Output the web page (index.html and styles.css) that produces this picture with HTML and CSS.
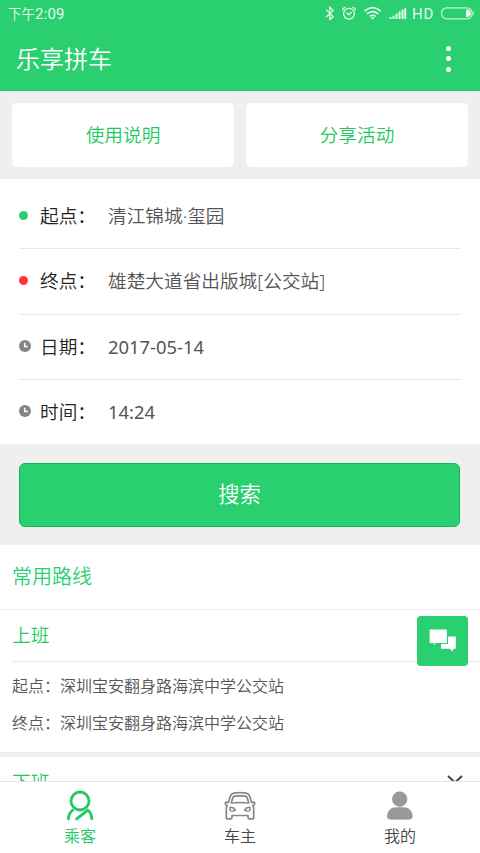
FILE: index.html
```html
<!DOCTYPE html>
<html lang="zh-CN">
<head>
<meta charset="utf-8">
<title>乐享拼车</title>
<link rel="stylesheet" href="styles.css">
</head>
<body>
<div class="app">
  <header class="header">
    <div class="status">
      <span class="clock">下午<b>2:09</b></span>
      <svg class="status-icons" width="84" height="20" viewBox="0 0 84 20" fill="none" stroke="#e3faeb" stroke-width="1.3">
        <path d="M1.200 9.400l7 6.700-3.500 3v-12.400l3.500 3.200-7 6.600" transform="translate(0 .5)"/>
        <circle cx="24.000" cy="13.700" r="5.400"/>
        <path d="M21.500 12.500l2.500 2.300 2.900-2.700M17.500 10.300q.3-2.500 3-2.900M30.500 10.300q-.3-2.500-3-2.900"/>
        <path d="M39.400 11.100q8.200-6.800 16.400 0M41.900 13.900q5.700-4.700 11.400 0M44.500 16.500q3.100-2.500 6.200 0" stroke-width="1.600"/>
        <circle cx="47.600" cy="18" r="1.300" fill="#e3faeb" stroke="none"/>
        <path d="M65.500 19v-1.800M68.500 19v-3.200M71.500 19v-5.200M74.500 19v-7.500M77.500 19v-9.500M80.200 19v-10.800" stroke-width="2"/>
      </svg>
      <span class="hd">HD</span>
      <svg class="battery" width="33" height="13" viewBox="0 0 33 13">
        <rect x=".6" y=".8" width="30.500" height="11" rx="5" fill="none" stroke="#c2f3d4" stroke-width="1.200"/>
        <path d="M25 2.500h1.500q3.300 0 3.300 3.800t-3.300 3.800h-1.500z" fill="#e3faeb"/>
        <path d="M32.300 4.500v3.600" stroke="#c2f3d4"/>
      </svg>
    </div>
    <div class="titlebar">
      <h1>乐享拼车</h1>
      <div class="more"><i></i><i></i><i></i></div>
    </div>
  </header>
  <nav class="links">
    <a class="link">使用说明</a>
    <a class="link">分享活动</a>
  </nav>
  <section class="form">
    <div class="row"><span class="mark"><i class="dot"></i></span><span class="label">起点：</span><span class="value">清江锦城·玺园</span></div>
    <div class="row"><span class="mark"><i class="dot red"></i></span><span class="label">终点：</span><span class="value">雄楚大道省出版城[公交站]</span></div>
    <div class="row"><span class="mark"><svg width="12" height="12" viewBox="0 0 12 12"><circle cx="6" cy="6" r="6" fill="#858585"/><path d="M5.700 2.800v3.700h3.200" fill="none" stroke="#fff" stroke-width="1.500"/></svg></span><span class="label">日期：</span><span class="value number">2017-05-14</span></div>
    <div class="row"><span class="mark"><svg width="12" height="12" viewBox="0 0 12 12"><circle cx="6" cy="6" r="6" fill="#858585"/><path d="M5.700 2.800v3.700h3.200" fill="none" stroke="#fff" stroke-width="1.500"/></svg></span><span class="label">时间：</span><span class="value number">14:24</span></div>
  </section>
  <div class="search"><button>搜索</button></div>
  <main class="routes">
    <h2>常用路线</h2>
    <article class="route">
      <h3>上班</h3>
      <div class="stops">
        <p>起点：深圳宝安翻身路海滨中学公交站</p>
        <p>终点：深圳宝安翻身路海滨中学公交站</p>
      </div>
      <div class="chat">
        <svg width="27" height="24" viewBox="0 0 27 24">
          <path d="M12 7.500h14.800v12.300h-2.800v3l-3.200-3H12z" fill="#fff"/>
          <path d="M0 0h18.500v14.500H7.300L4.100 17.300v-2.800H0z" fill="#fff" stroke="#2acf6f" stroke-width="1.200"/>
        </svg>
      </div>
    </article>
    <article class="route next">
      <h3>下班</h3>
      <svg class="chevron" width="16" height="10" viewBox="0 0 16 10" fill="none" stroke="#444" stroke-width="2"><path d="M1 1l7 6.500 7-6.500"/></svg>
    </article>
  </main>
  <footer class="tabs">
    <div class="tab active">
      <svg width="32" height="32" viewBox="0 0 32 32" fill="none" stroke="#1fca63" stroke-width="2.800" stroke-linecap="round">
        <circle cx="16" cy="11" r="9"/>
        <path d="M8.800 20Q4.800 23 4.400 28.800M23.800 20Q27.600 23 27.800 28.800M23.500 20.400L12.700 28.800"/>
      </svg>
      <span>乘客</span>
    </div>
    <div class="tab">
      <svg width="32" height="32" viewBox="0 0 32 32" fill="none" stroke="#858585" stroke-width="1.700" stroke-linejoin="round">
        <path d="M4.200 12.500L6.300 6.300Q7.200 3.600 9.800 3.100Q16 2.100 22.200 3.100Q24.800 3.600 25.700 6.300L27.800 12.500L30.300 12.200Q31.300 13.500 30 15L28.800 15.300Q29.700 17 29.700 19V27.800Q29.700 28.900 28.600 28.900H25.400Q24 28.900 24 27.600V25.500H8V27.600Q8 28.900 6.600 28.900H3.400Q2.300 28.900 2.300 27.800V19Q2.300 17 3.200 15.300L2 15Q.7 13.500 1.700 12.200Z"/>
        <path d="M7.200 13L8.900 7.500Q9.300 6.300 10.500 6.100Q16 5.500 21.500 6.100Q22.700 6.300 23.100 7.500L24.800 13Q16 12 7.200 13Z"/>
        <path d="M6 17.300Q10 17.300 11.500 20.200Q9 21.600 6.600 20.800Q5.200 19.800 6 17.300ZM26 17.300Q22 17.300 20.500 20.200Q23 21.600 25.400 20.800Q26.800 19.800 26 17.300Z" stroke-width="1.400"/>
      </svg>
      <span>车主</span>
    </div>
    <div class="tab">
      <svg width="32" height="32" viewBox="0 0 32 32" fill="#999" stroke="#888" stroke-width=".6">
        <circle cx="15.700" cy="9.100" r="7.300"/>
        <path d="M3.400 26.200Q4.200 17.800 11.500 17.700H20Q27.500 17.800 28.300 26.200Q28.300 29.100 25 29.200H6.700Q3.400 29.100 3.400 26.200Z"/>
      </svg>
      <span>我的</span>
    </div>
  </footer>
</div>
</body>
</html>
```
FILE: styles.css
```css
* { box-sizing: border-box; margin: 0; padding: 0; }
body {
  font-family: "Noto Sans", "Noto Sans CJK SC", sans-serif;
  font-weight: 350;
  background: #fff;
  color: #222;
}
.app { display: flex; flex-direction: column; width: 480px; height: 853px; overflow: hidden; background: #efefef; }
h1, h2, h3 { font-weight: 350; }
i { display: block; }
svg { display: block; flex: none; }

.header { flex: none; height: 91px; background: #2acf6f; border-bottom: 1px solid #24c867; color: #fff; }
.status { display: flex; height: 27px; padding-left: 8px; color: #e3faeb; font-family: Roboto, "Noto Sans CJK SC", sans-serif; }
.clock { width: 317px; font-size: 13.500px; line-height: 28px; }
.clock b { font-size: 15px; font-weight: 400; letter-spacing: .2px; }
.hd { width: 28px; margin-left: 3px; font-size: 15px; font-weight: 400; line-height: 28px; letter-spacing: .8px; }
.battery { margin: 7px 0 0 1px; }
.titlebar { display: flex; justify-content: space-between; align-items: center; height: 63px; padding: 0 29.500px 0 16px; }
h1 { font-size: 24px; line-height: 32px; }
.more { display: flex; flex-direction: column; gap: 5.500px; padding-top: 0; }
.more i { width: 5px; height: 5px; border-radius: 50%; background: #fff; }

.links { flex: none; display: flex; gap: 12px; height: 88px; padding: 12px; }
.link { flex: 1; height: 64px; border-radius: 5px; background: #fff; color: #1fc962; font-size: 18.670px; line-height: 63px; text-align: center; }

.form { flex: none; height: 265px; padding: 5px 19px 0; background: #fff; }
.row { display: flex; align-items: center; height: 65.330px; border-bottom: 1px solid #e9e9e9; font-size: 18.670px; line-height: 28px; }
.row:last-child { height: 64px; border-bottom: 0; }
.mark { width: 21px; margin-top: -1px; }
.dot { width: 9px; height: 9px; border-radius: 50%; background: #2acf6f; }
.dot.red { background: #ff3538; }
.label { width: 68px; white-space: nowrap; }
.value { color: #555; }
.number { font-size: 18.400px; font-weight: 400; }

.search { flex: none; height: 101px; padding: 18.500px 20px 0 19px; }
.search button { display: block; width: 100%; height: 64px; padding-bottom: 4px; border: 1px solid #16b354; border-radius: 6px; background: #2acf6f; color: #fff; font: inherit; font-size: 21.300px; }

.routes { flex: 1; min-height: 0; overflow: hidden; }
h2 { height: 65px; padding-left: 12px; border-bottom: 1px solid #eee; background: #fff; color: #2acf6f; font-size: 20px; line-height: 63px; }
.route { position: relative; height: 142px; padding-left: 12px; background: #fff; }
h3 { height: 52px; border-bottom: 1px solid #eaeaea; color: #1fc962; font-size: 18.670px; line-height: 50px; }
.stops { padding-top: 6px; color: #555; font-size: 16px; line-height: 37px; }
.chat { position: absolute; left: 417px; top: 6px; display: flex; align-items: center; justify-content: center; width: 51px; height: 50px; border-radius: 4px; background: #2acf6f; }
.next { display: flex; justify-content: space-between; height: 60px; margin-top: 5px; padding-right: 17px; }
.next h3 { border: 0; }
.chevron { margin-top: 18px; }

.tabs { flex: none; display: flex; height: 72px; border-top: 1px solid #e4e4e4; background: #fff; }
.tab { flex: 1; display: flex; flex-direction: column; align-items: center; padding-top: 8px; color: #444; font-size: 16px; line-height: 28px; }
.active { color: #1fca63; }
```
